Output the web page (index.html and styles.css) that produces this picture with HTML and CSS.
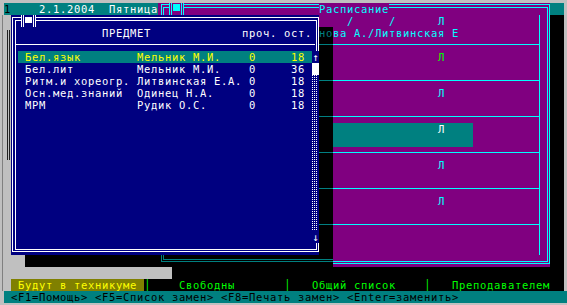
FILE: index.html
```html
<!DOCTYPE html>
<html lang="ru">
<head>
<meta charset="utf-8">
<title>Расписание</title>
<link rel="stylesheet" href="styles.css">
</head>
<body>
<div class="screen">
  <div class="topbar"><span class="dk">1</span>    2.1.2004  Пятница</div>
  <div class="topright"></div>

  <div class="graywin"><div class="gw-line"></div></div>
  <div class="graycell"></div>

  <div class="pwin">
    <div class="pw-title">
      <span class="cbtn cbtn-p"><span class="cbox"></span></span>
      <span class="pw-name">Расписание</span>
    </div>
    <div class="pw-table">
      <div class="t hd1">/     /      Л</div>
      <div class="t hd2">ва А./Литвинская Е</div>
      <div class="hl"></div>
      <div class="t lc"><span class="g">Л</span></div>
      <div class="t"></div>
      <div class="hl"></div>
      <div class="t lc">Л</div>
      <div class="t"></div>
      <div class="hl"></div>
      <div class="tealblk">Л</div>
      <div class="hl"></div>
      <div class="t lc">Л</div>
      <div class="t"></div>
      <div class="hl"></div>
      <div class="t lc">Л</div>
      <div class="t"></div>
      <div class="hl"></div>
      <div class="t"></div>
      <div class="t"></div>
    </div>
  </div>

  <div class="shadow-r">
    <div class="t">но</div>
    <div class="hl dim"></div>
    <div class="t"></div>
    <div class="t"></div>
    <div class="hl dim"></div>
    <div class="t"></div>
    <div class="t"></div>
    <div class="hl dim"></div>
    <div class="t"></div>
    <div class="t"></div>
    <div class="hl dim"></div>
    <div class="t"></div>
    <div class="t"></div>
    <div class="hl dim"></div>
    <div class="t"></div>
    <div class="t"></div>
    <div class="hl dim"></div>
    <div class="t"></div>
    <div class="t"></div>
    <div class="dbl"></div>
  </div>
  <div class="shadow-b"><div class="dcorner"><div class="dci"></div></div></div>

  <div class="nwin">
    <div class="nw-title"><span class="cbtn cbtn-n"><span class="cbox"></span></span></div>
    <div class="nw-head"><span class="h1">ПРЕДМЕТ</span><span class="h2">проч. ост.</span></div>
    <div class="nw-sep"></div>
    <div class="nw-body">
      <div class="list">
        <div class="row sel"><span>Бел.язык</span><span>Мельник М.И.</span><span>0</span><span class="cnt">18</span></div>
        <div class="row"><span>Бел.лит</span><span>Мельник М.И.</span><span>0</span><span class="cnt">36</span></div>
        <div class="row"><span>Ритм.и хореогр.</span><span>Литвинская Е.А.</span><span>0</span><span class="cnt">18</span></div>
        <div class="row"><span>Осн.мед.знаний</span><span>Одинец Н.А.</span><span>0</span><span class="cnt">18</span></div>
        <div class="row"><span>МРМ</span><span>Рудик О.С.</span><span>0</span><span class="cnt">18</span></div>
      </div>
      <div class="scroll">
        <div class="sb-arrow">↑</div>
        <div class="sb-thumb"></div>
        <div class="sb-track"></div>
        <div class="sb-arrow">↓</div>
      </div>
    </div>
  </div>

  <div class="tabs"><span class="olive">Будут в техникуме</span><span class="rest">│    Свободны       │   Общий список    │   Преподавателем</span></div>
  <div class="status">&lt;F1=Помощь&gt; &lt;F5=Список замен&gt; &lt;F8=Печать замен&gt; &lt;Enter=заменить&gt;</div>
</div>
</body>
</html>
```
FILE: styles.css
```css
* { box-sizing: border-box; margin: 0; padding: 0; }

html, body { width: 567px; height: 305px; overflow: hidden; }

body {
  background: linear-gradient(#808080, #808080) 2px 15px / 1px 276px no-repeat, #c0c0c0;
  padding: 3px 3px 2px 4px;
  font-family: "DejaVu Sans Mono", "Liberation Mono", monospace;
  font-size: 10.5px;
  letter-spacing: 0.68px;
  line-height: 12px;
}

.screen {
  display: grid;
  grid-template-columns: repeat(80, 7px);
  grid-template-rows: repeat(25, 12px);
  width: 560px;
  height: 300px;
  background: #000;
}

/* top line */
.topbar { grid-area: 1 / 1 / 2 / 23; background: #008080; color: #fff; white-space: pre; }
.dk { color: #000; }
.topright { grid-area: 1 / 79 / 2 / 81; background: #008080; }

/* gray background window */
.graywin { grid-area: 2 / 1 / 24 / 25; background: #c0c0c0; z-index: 1; }
.gw-line {
  margin: 15px 0 0 3px;
  width: 3px;
  height: 130px;
  border-left: 1px solid #202020;
  border-right: 1px solid #202020;
}
.graycell { grid-area: 24 / 1 / 25 / 2; background: #c0c0c0; }

/* shared */
.t { height: 12px; white-space: pre; }
.hl {
  height: 12px;
  background: linear-gradient(#00ffff, #00ffff) 0 5px / 100% 1px no-repeat;
}
.hl.dim { background: linear-gradient(#008080, #008080) 0 5px / 100% 1px no-repeat; }

.cbtn {
  position: relative;
  z-index: 1;
  display: block;
  height: 12px;
  width: 15px;
  border-left: 3px double;
  border-right: 3px double;
}
.cbox { display: block; width: 7px; margin-left: 1px; }

/* schedule window */
.pwin {
  grid-area: 1 / 23 / 23 / 79;
  position: relative;
  z-index: 2;
  background: #800080;
  color: #00ffff;
}
.pwin::before,
.pwin::after {
  content: "";
  position: absolute;
  border: 1px solid #00ffff;
}
.pwin::before { left: 3px; top: 1px; width: 387px; height: 258px; }
.pwin::after { left: 5px; top: 4px; width: 383px; height: 253px; }

.pw-title { display: flex; height: 12px; }
.cbtn-p { margin-left: 11px; background: #800080; border-color: #00ffff; }
.cbtn-p .cbox { height: 7px; margin-top: 1px; background: #00ffff; }
.pw-name { position: relative; z-index: 1; margin-left: 135px; background: #800080; white-space: pre; }

.pw-table { width: 382px; height: 240px; border-right: 1px solid #00ffff; }
.hd1 { padding-left: 189px; }
.hd2 { padding-left: 175px; }
.lc { padding-left: 280px; }
.g { color: #00ff00; }
.tealblk {
  width: 315px;
  height: 24px;
  padding-left: 280px;
  background: #008080;
  color: #fff;
}

/* dialog shadow */
.shadow-r { grid-area: 3 / 46 / 23 / 48; z-index: 3; background: #000; color: #008080; overflow: hidden; }
.dbl {
  height: 12px;
  background:
    linear-gradient(#008080, #008080) 0 4px / 100% 1px no-repeat,
    linear-gradient(#008080, #008080) 0 6px / 100% 1px no-repeat;
}
.shadow-b { grid-area: 22 / 4 / 23 / 46; z-index: 3; background: #000; }
.dcorner {
  margin-left: 136px;
  height: 7px;
  border-left: 1px solid #008080;
  border-bottom: 1px solid #008080;
}
.dci {
  margin-left: 1px;
  height: 5px;
  border-left: 1px solid #008080;
  border-bottom: 1px solid #008080;
}

/* subject dialog */
.nwin {
  grid-area: 2 / 2 / 22 / 46;
  position: relative;
  z-index: 4;
  background: #000080;
  color: #fff;
}
.nwin::before,
.nwin::after {
  content: "";
  position: absolute;
  border: 1px solid #fff;
}
.nwin::before { left: 1px; top: 2px; width: 305px; height: 233px; }
.nwin::after { left: 4px; top: 5px; width: 300px; height: 228px; }

.nw-title { display: flex; height: 12px; }
.cbtn-n { margin-left: 10px; background: #000080; border-color: #fff; }
.cbtn-n .cbox { height: 6px; margin-top: 2px; background: #fff; }

.nw-head { display: flex; height: 12px; width: 294px; margin-left: 7px; }
.h1 { margin-left: 84px; }
.h2 { margin-left: auto; }

.nw-sep {
  height: 12px;
  width: 300px;
  margin-left: 4px;
  background: linear-gradient(#fff, #fff) 0 5px / 100% 1px no-repeat;
}

.nw-body { display: flex; height: 192px; }
.list { width: 294px; margin-left: 7px; }
.row {
  display: grid;
  grid-template-columns: 112px 112px 7px 49px;
  height: 12px;
  padding: 0 7px;
  white-space: pre;
}
.row.sel { background: #008080; color: #ffff00; }
.cnt { text-align: right; }

.scroll {
  position: relative;
  z-index: 1;
  width: 7px;
  background: #000080;
}
.sb-arrow { height: 12px; text-align: center; letter-spacing: 0; }
.sb-thumb { height: 12px; background: #fff; }
.sb-track {
  height: 156px;
  width: 5px;
  background:
    linear-gradient(to bottom, transparent 1px, #000080 1px) 0 0 / 2px 2px,
    linear-gradient(to right, transparent 1px, #000080 1px) 0 0 / 2px 2px,
    #fff;
}

/* bottom lines */
.tabs { grid-area: 24 / 2 / 25 / 81; display: flex; }
.olive { width: 133px; padding-left: 7px; background: #808000; color: #ffff00; white-space: pre; }
.rest { color: #00ff00; white-space: pre; }

.status {
  grid-area: 25 / 1 / 26 / 81;
  margin-right: -3px;
  padding-left: 7px;
  background: #008080;
  color: #000;
  white-space: pre;
}
```
